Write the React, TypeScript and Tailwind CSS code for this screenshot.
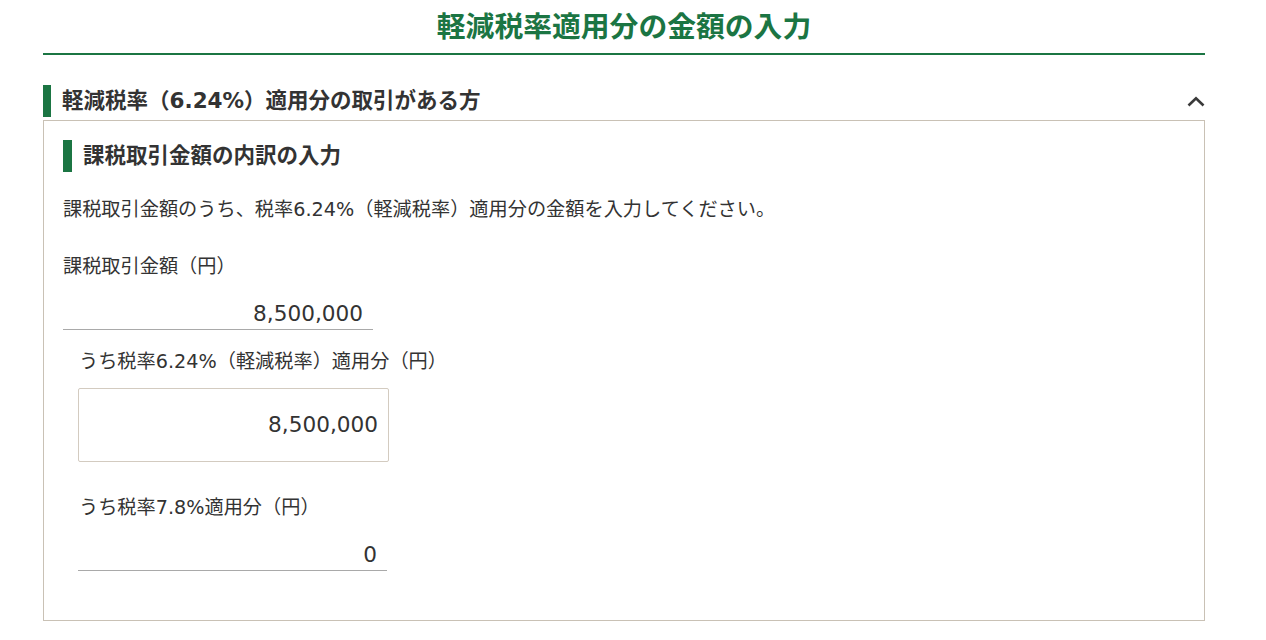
import React from "react";

const AmountLine = ({ value, width }: { value: string; width: string }) => (
  <div
    className={`${width} h-[31px] border-b border-[#a9a9a9] text-right pr-[10px] text-[21.6px] leading-[30px] text-[#333]`}
  >
    {value}
  </div>
);

const ChevronUp = () => (
  <svg width="18" height="11" viewBox="0 0 18 11" fill="none">
    <path d="M1.5 9.5 L9 2.2 L16.5 9.5" stroke="#3a3a3a" strokeWidth="2.6" />
  </svg>
);

const App: React.FC = (): JSX.Element => {
  return (
    <div
      className="min-h-[640px] bg-white text-[#333]"
      style={{ fontFamily: '"DejaVu Sans", "Noto Sans CJK JP", sans-serif' }}
    >
      <div className="w-[1162px] ml-[43px]">
        {/* Page title */}
        <h1 className="h-[55px] border-b-2 border-[#1b7543] flex items-center justify-center pt-[2px] text-[28.8px] font-bold text-[#1b7543]">
          軽減税率適用分の金額の入力
        </h1>

        {/* Accordion header */}
        <div className="mt-[30px] h-[32px] flex items-center justify-between">
          <div className="flex items-center h-full">
            <span className="w-[8px] h-[32px] bg-[#1b7543]" />
            <h2 className="ml-[11px] text-[21.5px] font-bold leading-[32px] text-[#333]">
              軽減税率（6.24%）適用分の取引がある方
            </h2>
          </div>
          <ChevronUp />
        </div>

        {/* Accordion body */}
        <div className="mt-[3px] border border-[#c9c1b5] px-[19px] pt-[19px] pb-[49px]">
          <div className="flex items-center h-[32px]">
            <span className="w-[9px] h-[32px] bg-[#1b7543]" />
            <h3 className="ml-[11px] text-[21.5px] font-bold leading-[32px]">
              課税取引金額の内訳の入力
            </h3>
          </div>

          <p className="mt-[24px] text-[19.2px] leading-[28px]">
            課税取引金額のうち、税率6.24%（軽減税率）適用分の金額を入力してください。
          </p>

          <p className="mt-[29px] text-[19.2px] leading-[28px]">課税取引金額（円）</p>
          <div className="mt-[18px]">
            <AmountLine value="8,500,000" width="w-[310px]" />
          </div>

          <div className="pl-[15px]">
            <p className="mt-[18px] text-[19.2px] leading-[28px] pl-[1px]">
              うち税率6.24%（軽減税率）適用分（円）
            </p>
            <div className="mt-[12px] w-[311px] h-[74px] border border-[#d3cbc0] rounded-[2px] flex items-center justify-end pr-[10px] text-[21.6px]">
              8,500,000
            </div>

            <p className="mt-[32px] text-[19.2px] leading-[28px] pl-[1px]">
              うち税率7.8%適用分（円）
            </p>
            <div className="mt-[18px]">
              <AmountLine value="0" width="w-[309px]" />
            </div>
          </div>
        </div>
      </div>
    </div>
  );
};

export default App;
